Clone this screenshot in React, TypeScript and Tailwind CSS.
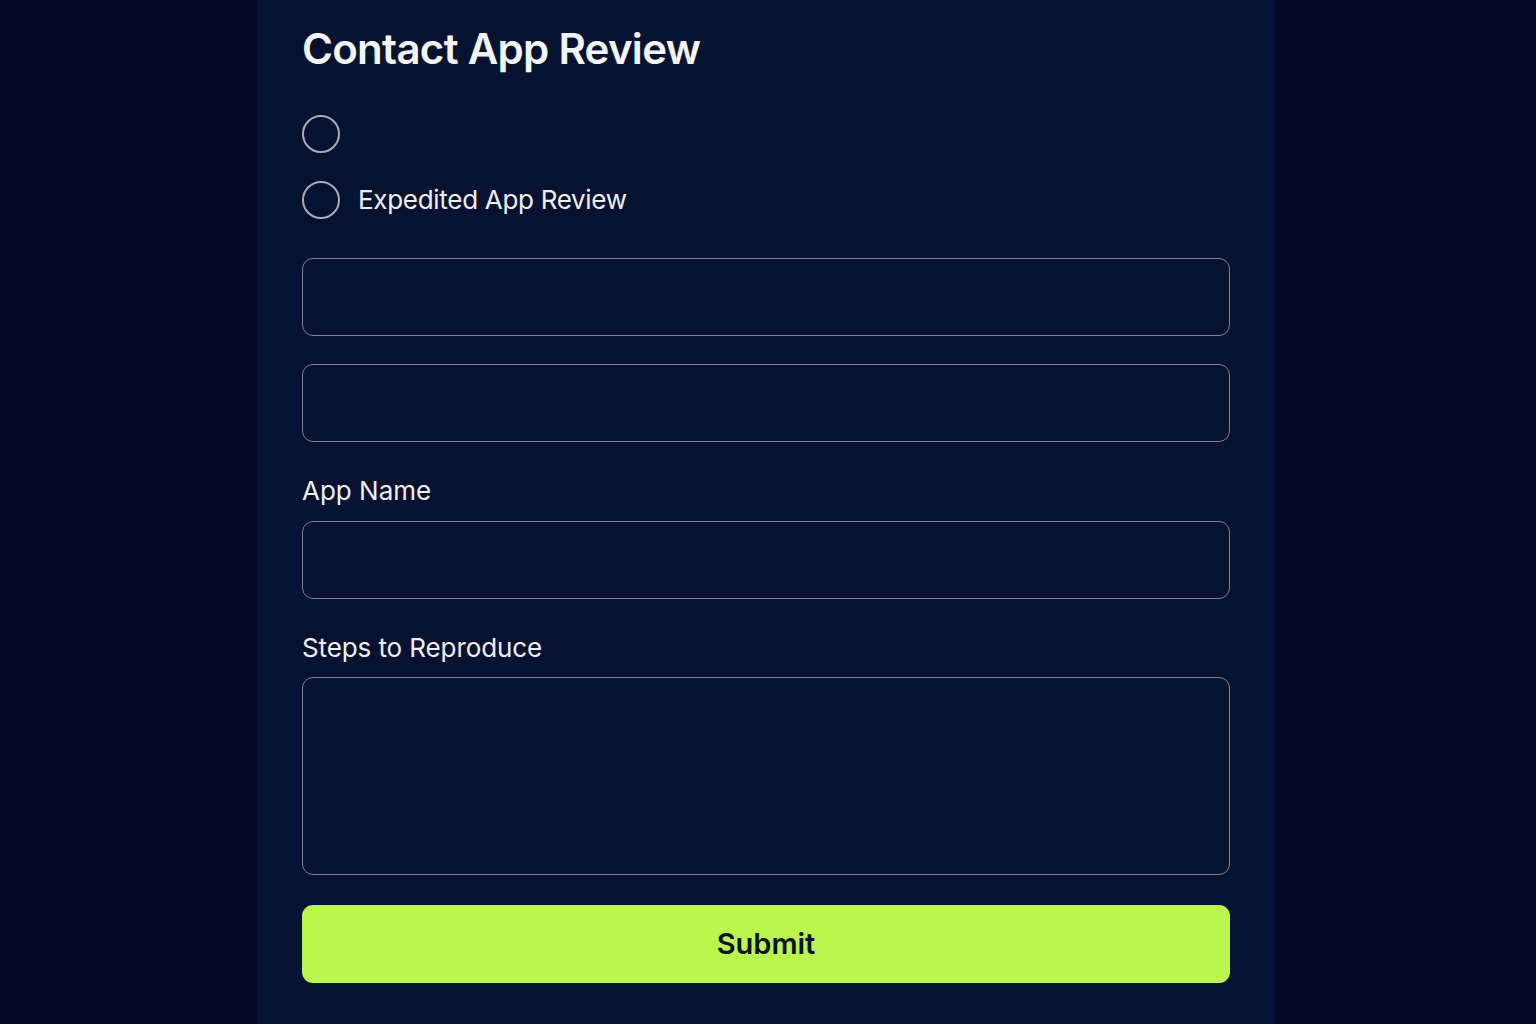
import React from "react";

export default function App() {
  return (
    <div
      className="w-full min-h-screen h-[1024px] bg-[#030a24] flex pl-[257px] overflow-hidden"
      style={{ fontFamily: "Inter, 'Noto Sans', sans-serif" }}
    >
      <div className="w-[1018px] h-full bg-[#071231] px-[45px] pt-[22px] flex flex-col">
        <h1 className="text-[42px] leading-[53px] font-semibold text-[#f4f5f8] tracking-[-0.7px]">
          Contact App Review
        </h1>

        <div className="mt-[40px] flex flex-col gap-[28px]">
          <label className="flex items-center gap-[18px]">
            <span className="w-[38px] h-[38px] rounded-full border-2 border-[#a9adb9]" />
          </label>
          <label className="flex items-center gap-[18px]">
            <span className="w-[38px] h-[38px] rounded-full border-2 border-[#a9adb9]" />
            <span className="text-[26px] leading-[32px] tracking-[-0.3px] text-[#eef0f4]">
              Expedited App Review
            </span>
          </label>
        </div>

        <div className="mt-[39px] flex flex-col gap-[28px]">
          <div className="h-[78px] rounded-[11px] border-[1.5px] border-[#7d8293]" />
          <div className="h-[78px] rounded-[11px] border-[1.5px] border-[#7d8293]" />
        </div>

        <div className="mt-[33px] text-[26px] leading-[32px] text-[#eef0f4]">App Name</div>
        <div className="mt-[14px] h-[78px] rounded-[11px] border-[1.5px] border-[#7d8293]" />

        <div className="mt-[33px] text-[26px] leading-[32px] tracking-[-0.1px] text-[#eef0f4]">
          Steps to Reproduce
        </div>
        <div className="mt-[13px] h-[198px] rounded-[11px] border-[1.5px] border-[#7d8293]" />

        <button className="mt-[30px] h-[78px] rounded-[11px] bg-[#bbf74a] text-[#0a0f1a] text-[29px] font-semibold flex items-center justify-center">
          Submit
        </button>
      </div>
    </div>
  );
}
